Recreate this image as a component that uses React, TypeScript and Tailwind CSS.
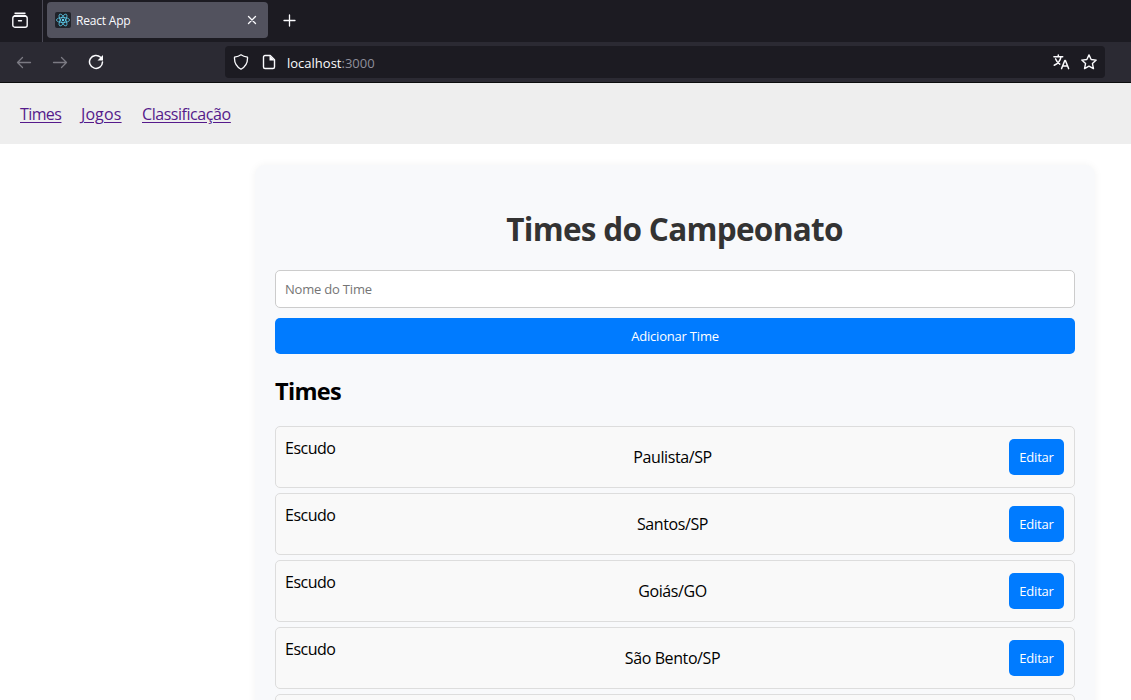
import React from "react";

const teams = ["Paulista/SP", "Santos/SP", "Goiás/GO", "São Bento/SP"];

function TabBar() {
  return (
    <div className="flex h-[42px] shrink-0 items-center bg-[#1c1b22] text-[#fbfbfe]">
      <div className="flex h-full w-[43px] items-center border-r border-[#4a4955] pb-[2px] pl-3">
        <svg width="16" height="16" viewBox="0 0 16 16" fill="none" stroke="currentColor" strokeWidth="1.4" strokeLinecap="round">
          <path d="M3 1.2h10" />
          <rect x="0.8" y="4.2" width="14.4" height="11" rx="2" />
          <path d="M2 4.2c.4-.5 1-.7 1.700-.7h8.600c.7 0 1.300.2 1.700.7M6.500 8.700h3" />
        </svg>
      </div>
      <div className="mb-[2px] ml-1 flex h-9 w-[221px] items-center rounded bg-[#52525e] pl-2 pr-[11px]">
        <svg width="16" height="16" viewBox="0 0 16 16" fill="none" stroke="#61dafb" strokeWidth="0.7">
          <rect width="16" height="16" rx="2" fill="#20232a" stroke="none" />
          <ellipse cx="8" cy="8" rx="6.600" ry="2.500" />
          <ellipse cx="8" cy="8" rx="6.600" ry="2.500" transform="rotate(60 8 8)" />
          <ellipse cx="8" cy="8" rx="6.600" ry="2.500" transform="rotate(120 8 8)" />
          <circle cx="8" cy="8" r="1.200" fill="#61dafb" stroke="none" />
        </svg>
        <span className="ml-[5px] flex-1 pt-px text-[12px] leading-4 tracking-[-0.2px]">React App</span>
        <svg width="10" height="10" viewBox="0 0 10 10" fill="none" stroke="currentColor" strokeWidth="1.300" strokeLinecap="round">
          <path d="M1.500 1.500l7 7M8.500 1.500l-7 7" />
        </svg>
      </div>
      <svg className="mb-px ml-[15px]" width="13" height="13" viewBox="0 0 13 13" fill="none" stroke="currentColor" strokeWidth="1.300" strokeLinecap="round">
        <path d="M6.500 1v11M1 6.500h11" />
      </svg>
    </div>
  );
}

function Toolbar() {
  return (
    <div className="flex h-[41px] shrink-0 items-center border-b border-[#0c0c0d] bg-[#2b2a33] pl-4 pr-[26px] text-[#fbfbfe]">
      <svg className="text-[#7b7a83]" width="16" height="16" viewBox="0 0 16 16" fill="none" stroke="currentColor" strokeWidth="1.300" strokeLinecap="round" strokeLinejoin="round">
        <path d="M14.500 8.500h-13M6.500 3.500l-5 5 5 5" />
      </svg>
      <svg className="ml-5 text-[#7b7a83]" width="16" height="16" viewBox="0 0 16 16" fill="none" stroke="currentColor" strokeWidth="1.300" strokeLinecap="round" strokeLinejoin="round">
        <path d="M1.500 8.500h13M9.500 3.500l5 5-5 5" />
      </svg>
      <svg className="ml-5" width="16" height="16" viewBox="0 0 16 16" fill="none" stroke="currentColor" strokeWidth="1.500" strokeLinecap="round">
        <path d="M12.600 3.300A6.500 6.500 0 1 0 14.500 8" />
        <path d="M15 1v5.500H9.500z" fill="currentColor" stroke="none" />
      </svg>
      <div className="ml-[121px] flex h-8 flex-1 items-center rounded bg-[#1c1b22] pl-2 pr-2">
        <svg width="16" height="16" viewBox="0 0 16 16" fill="none" stroke="currentColor" strokeWidth="1.300" strokeLinejoin="round">
          <path d="M8 .8c1.800 1.300 4 2 6.500 2.400.3 5-1.500 9.300-6.500 12C3 12.500 1.200 8.200 1.500 3.200 4 2.800 6.200 2.100 8 .8z" />
        </svg>
        <svg className="ml-3" width="16" height="16" viewBox="0 0 16 16" fill="none" stroke="currentColor" strokeWidth="1.400" strokeLinejoin="round">
          <path d="M4 1.500h5.200l4.300 4.300V13a1.500 1.500 0 0 1-1.500 1.500H4A1.500 1.500 0 0 1 2.500 13V3A1.500 1.500 0 0 1 4 1.500z" />
          <path d="M8.500 1.500v5h5z" fill="currentColor" stroke="none" />
        </svg>
        <span className="ml-[10px] flex-1 pt-px text-[13px] leading-5">
          localhost<span className="text-[#8f8f9b]">:3000</span>
        </span>
        <svg width="18" height="16" viewBox="0 0 18 16" fill="none" stroke="currentColor" strokeWidth="1.500" strokeLinecap="round" strokeLinejoin="round">
          <path d="M.9 2.700h8.800M5.300 1v1.700M1.200 11.300c3.400-1.400 6-4.300 6.800-8.400M2.600 4.900c.9 2.300 2.300 4 4.200 5.300" />
          <path d="M8.600 14.600l3.200-8.200h.6l3.200 8.200M9.900 12h4.400" />
        </svg>
        <svg className="ml-[10px]" width="16" height="16" viewBox="0 0 16 16" fill="none" stroke="currentColor" strokeWidth="1.400" strokeLinejoin="round">
          <path d="M8 .9l2.150 4.600 5.050.6-3.750 3.500 1 5L8 12.100l-4.450 2.500 1-5L.8 6.100l5.050-.6z" />
        </svg>
      </div>
    </div>
  );
}

export default function App() {
  return (
    <div className="flex h-[700px] w-[1131px] flex-col overflow-hidden bg-white font-['Open_Sans','Noto_Sans',sans-serif] text-black">
      <TabBar />
      <Toolbar />
      <nav className="flex h-[61px] shrink-0 items-center gap-5 bg-[#eeeeee] px-5 pb-px pt-[2px] text-[16px] text-[#551a8b] underline underline-offset-2">
        <a className="w-[41px] whitespace-nowrap tracking-[-0.6px]">Times</a>
        <a className="w-[41px] whitespace-nowrap tracking-[0.1px]">Jogos</a>
        <a className="tracking-[-0.45px]">Classificação</a>
      </nav>
      <main className="ml-[255px] mt-[21px] w-[840px] shrink-0 rounded-[10px] bg-[#f8f9fb] px-5 pt-[42px] shadow-[0_0_8px_rgba(0,0,0,0.05)]">
        <h1 className="pr-px text-center text-[31.5px] font-bold leading-[44px] tracking-[-0.7px] text-[#333333]">Times do Campeonato</h1>
        <input
          className="mt-[19px] block h-[38px] w-full rounded-[5px] border border-[#cccccc] bg-white pl-[9px] pr-[10px] text-[13px] tracking-[-0.2px] placeholder:text-[#757575]"
          placeholder="Nome do Time"
        />
        <button className="mt-[10px] block h-9 w-full rounded-[5px] bg-[#007bff] pt-px text-[13px] font-medium tracking-[-0.2px] text-white">Adicionar Time</button>
        <h2 className="mt-[19px] text-[23.5px] font-bold leading-9 tracking-[-0.7px]">Times</h2>
        <ul className="mt-[17px] flex flex-col gap-[5px]">
          {teams.map((team) => (
            <li key={team} className="flex h-[62px] items-center justify-between rounded-[5px] border border-[#dddddd] bg-[#f9f9f9] px-[10px]">
              <span className="-ml-px flex h-10 w-[51px] items-start text-[16px] leading-[22px] tracking-[-0.5px]">Escudo</span>
              <span className="text-[16px] leading-[22px] tracking-[-0.4px]">{team}</span>
              <button className="h-9 w-[55px] rounded-[5px] bg-[#007bff] pt-px text-[13px] font-medium tracking-[-0.2px] text-white">Editar</button>
            </li>
          ))}
          <li className="h-[62px] rounded-[5px] border border-[#dddddd] bg-[#f9f9f9]" />
        </ul>
      </main>
    </div>
  );
}
